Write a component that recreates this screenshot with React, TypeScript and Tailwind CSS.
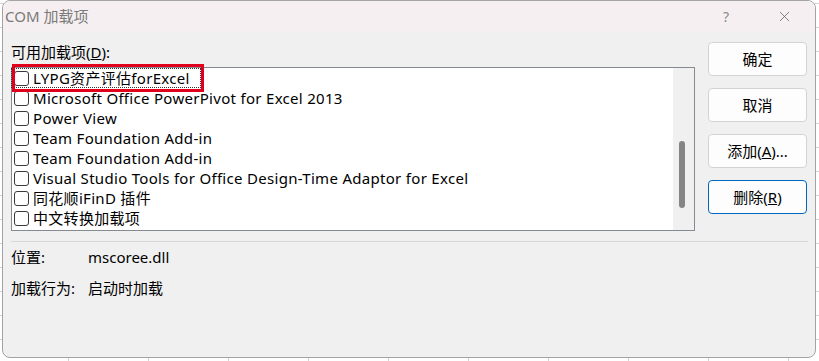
import { X } from "lucide-react";

const addins = [
  "LYPG资产评估forExcel",
  "Microsoft Office PowerPivot for Excel 2013",
  "Power View",
  "Team Foundation Add-in",
  "Team Foundation Add-in",
  "Visual Studio Tools for Office Design-Time Adaptor for Excel",
  "同花顺iFinD 插件",
  "中文转换加载项",
];

const font = "font-['Noto_Sans','Noto_Sans_CJK_SC',sans-serif]";

function Checkbox() {
  return (
    <span className="w-[15px] h-[15px] shrink-0 rounded-[3px] border border-[#3a3a3a] bg-white" />
  );
}

function DialogButton({
  children,
  focused,
}: {
  children: React.ReactNode;
  focused?: boolean;
}) {
  return (
    <button
      className={`h-[34px] w-[99px] rounded-[4px] bg-[#fdfdfd] text-[15px] text-black ${
        focused ? "border border-[#0067c0]" : "border border-[#d3d3d3]"
      }`}
    >
      {children}
    </button>
  );
}

export default function App() {
  return (
    <div
      className={`w-[819px] h-[361px] overflow-hidden bg-white bg-[linear-gradient(to_right,#d4d4d4_1px,transparent_1px),linear-gradient(to_bottom,#d4d4d4_1px,transparent_1px)] bg-size-[80px_24px] bg-position-[68px_3px] pl-[2px] pr-[3px] pb-[3px] ${font}`}
    >
      <div className="h-full flex flex-col rounded-lg border border-[#a3a3a3] bg-[#f0f0f0] overflow-hidden">
        {/* title bar */}
        <div className="h-[31px] shrink-0 flex items-center bg-[#f6eff1] pl-[2px] pr-[22px]">
          <span className="text-[15px] text-[#7a7a7a]">COM 加载项</span>
          <span className="ml-auto text-[14px] text-[#8a8a8a] mr-[47px]">?</span>
          <X size={17} strokeWidth={1.1} className="text-[#606060]" />
        </div>

        {/* body */}
        <div className="flex-1 px-[8px] pt-[10px]">
          <div className="flex gap-[13px]">
            <div className="flex-1 min-w-0">
              <div className="h-[20px] leading-[20px] text-[15px] text-black">
                可用加载项(<span className="underline">D</span>):
              </div>
              <div className="relative mt-[5px] h-[164px] flex border border-[#868a91] bg-white">
                <div className="flex-1">
                  {addins.map((name, i) => (
                    <div
                      key={i}
                      className={`h-[20px] flex items-center gap-[4px] pl-[2px] text-[15px] tracking-[0.3px] leading-[20px] text-black whitespace-nowrap ${
                        i === 0 ? "border border-dotted border-[#333] -ml-[1px] w-[190px]" : ""
                      }`}
                    >
                      <Checkbox />
                      <span>{name}</span>
                    </div>
                  ))}
                </div>
                <div className="w-[21px] bg-[#f0f0f0] pt-[73px] pl-[6px]">
                  <div className="w-[6px] h-[67px] rounded-[3px] bg-[#858585]" />
                </div>
                {/* red annotation box */}
                <div className="absolute left-[0px] top-[-4px] w-[192px] h-[28px] border-[3px] border-[#e0001b]" />
              </div>
            </div>
            <div className="flex flex-col gap-[12px]">
              <DialogButton>确定</DialogButton>
              <DialogButton>取消</DialogButton>
              <DialogButton>
                添加(<span className="underline">A</span>)...
              </DialogButton>
              <DialogButton focused>
                删除(<span className="underline">R</span>)
              </DialogButton>
            </div>
          </div>

          <div className="mt-[10px] h-px bg-[#d8d8d8] mr-[-1px]" />

          <div className="mt-[5px] flex flex-col gap-[11px] text-[15px] text-black">
            <div className="flex h-[20px] items-center">
              <span className="w-[77px]">位置:</span>
              <span>mscoree.dll</span>
            </div>
            <div className="flex h-[20px] items-center">
              <span className="w-[77px]">加载行为:</span>
              <span>启动时加载</span>
            </div>
          </div>
        </div>
      </div>
    </div>
  );
}
